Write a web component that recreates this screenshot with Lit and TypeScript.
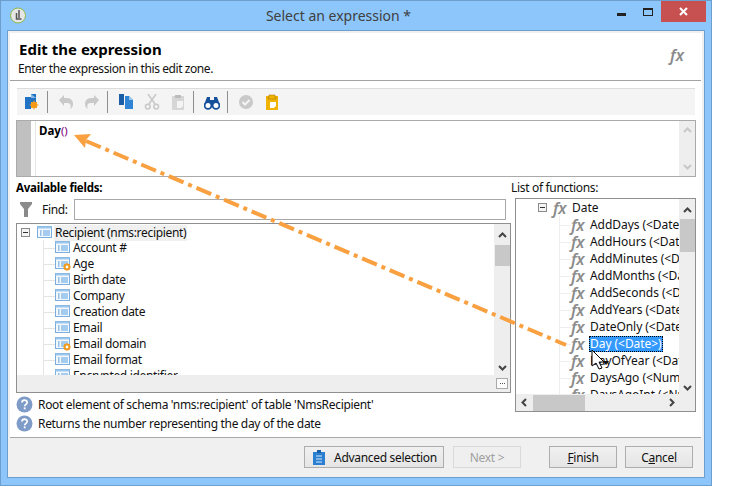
import { LitElement, css, html, svg } from "lit";
import { customElement } from "lit/decorators.js";

const fields = [
  ["Account #", false],
  ["Age", true],
  ["Birth date", false],
  ["Company", false],
  ["Creation date", false],
  ["Email", false],
  ["Email domain", true],
  ["Email format", false],
  ["Encrypted identifier", true],
] as const;

const functions = [
  "AddDays (<Date>, <Number>)",
  "AddHours (<Date>, <Number>)",
  "AddMinutes (<Date>, <Number>)",
  "AddMonths (<Date>, <Number>)",
  "AddSeconds (<Date>, <Number>)",
  "AddYears (<Date>, <Number>)",
  "DateOnly (<Date>)",
  "Day (<Date>)",
  "DayOfYear (<Date>)",
  "DaysAgo (<Number>)",
  "DaysAgoInt (<Number>)",
];

const listIcon = (gear: boolean) => html`<svg class="field-ic" width="16" height="14" viewBox="0 0 16 14">
  <rect x="0.5" y="0.5" width="14" height="11" fill="#f2f8fe" stroke="#7aaede" />
  <rect x="0.5" y="0.5" width="14" height="2" fill="#9cc6ec" />
  <path d="M3 5h1.5M3 7h1.5M3 9h1.5" stroke="#3b8ad8" />
  <path d="M6 5h7M6 7h7M6 9h7" stroke="#5a9fe0" />
  ${gear
    ? svg`<circle cx="12" cy="10" r="2.4" fill="#fff" stroke="#ef9a1e" stroke-width="2" />
        <path d="M12 6.4v1M12 12.6v1M8.4 10h1M14.6 10h1M9.5 7.5l.7.7M13.8 11.8l.7.7M14.5 7.5l-.7.7M10.2 11.8l-.7.7" stroke="#ef9a1e" />`
    : ""}
</svg>`;

const helpIcon = html`<svg width="17" height="17" viewBox="0 0 17 17">
  <circle cx="8.5" cy="8.5" r="8" fill="#7f9cc9" />
  <path d="M6 6.6c0-3.2 5.2-3.2 5.2-.1 0 1.9-2.5 1.9-2.5 3.8" fill="none" stroke="#fff" stroke-width="1.7" />
  <rect x="7.8" y="11.4" width="1.8" height="1.9" fill="#fff" />
</svg>`;

const expander = html`<svg class="expander" width="9" height="9" viewBox="0 0 9 9">
  <rect x="0.5" y="0.5" width="8" height="8" fill="#f4f4f4" stroke="#8a8a8a" />
  <path d="M2 4.5h5" stroke="#333" />
</svg>`;

const chevron = (d: string) => html`<svg width="9" height="6" viewBox="0 0 9 6">
  <path d=${d} fill="none" stroke="currentColor" stroke-width="2" />
</svg>`;
const UP = "M1 5l3.5-3.5L8 5";
const DOWN = "M1 1l3.5 3.5L8 1";

@customElement("app-root")
export class AppRoot extends LitElement {
  static styles = css`
    :host {
      display: block;
      width: 751px;
      height: 498px;
      background: #fff;
      font-family: "Noto Sans", "Open Sans", sans-serif;
      font-size: 12px;
      letter-spacing: -0.32px;
      color: #111;
      overflow: hidden;
    }
    * {
      box-sizing: border-box;
    }
    .window {
      position: relative;
      width: 712px;
      height: 486px;
      background: #8cc6fb;
      border: 1px solid #6c9fcd;
      display: flex;
      flex-direction: column;
      padding: 0 6px 7px;
    }
    .titlebar {
      height: 29px;
      flex: none;
      display: flex;
      align-items: flex-start;
      margin: 0 -6px;
      padding-right: 5px;
    }
    .logo {
      margin: 6px 0 0 9px;
    }
    .title {
      flex: 1;
      text-align: center;
      font-size: 14px;
      letter-spacing: 0;
      line-height: 29px;
      color: #404040;
      padding-left: 34px;
    }
    .ctl {
      display: flex;
      align-items: flex-start;
    }
    .ctl svg {
      display: block;
    }
    .ctl .maxi {
      margin-left: 17px;
    }
    .close {
      width: 45px;
      height: 21px;
      background: #c75050;
      display: flex;
      align-items: center;
      justify-content: center;
      margin-left: 8px;
    }
    .frame {
      flex: 1;
      min-height: 0;
      background: #f0f0f0;
      border: 1px solid #6c9fcd;
      padding: 2px 2px 0;
      display: flex;
      flex-direction: column;
    }
    .main {
      height: 404px;
      flex: none;
      background: #fff;
      display: flex;
      flex-direction: column;
    }
    .head {
      height: 48px;
      flex: none;
      margin-right: 1px;
      border-bottom: 1px solid #a3a3a3;
      padding: 6px 0 0 9px;
      display: flex;
      justify-content: space-between;
    }
    .head h1 {
      margin: 0;
      font-size: 15px;
      letter-spacing: 0;
      line-height: 20px;
      font-weight: 700;
      color: #000;
    }
    .head p {
      margin: 2px 0 0 -1px;
      letter-spacing: -0.42px;
      line-height: 16px;
    }
    .fx-big {
      font-size: 16px;
      font-style: italic;
      font-weight: 600;
      letter-spacing: 0;
      color: #8a8a8a;
      margin: 5px 17px 0 0;
      line-height: 22px;
    }
    .toolbar {
      height: 27px;
      margin: 7px 7px 0;
      flex: none;
      background: #f4f4f4;
      border-top: 1px solid #dcdcdc;
      display: flex;
      align-items: center;
      gap: 10px;
      padding-left: 7px;
    }
    .sep {
      width: 1px;
      height: 22px;
      background: #8f8f8f;
      margin-left: -3px;
    }
    .editor {
      height: 57px;
      margin: 5px 6px 0;
      flex: none;
      border: 1px solid #aaa;
      display: flex;
    }
    .gutter {
      width: 14px;
      background: #c0c0c0;
      flex: none;
    }
    .code {
      flex: 1;
      margin-left: 4px;
      border-left: 1px solid #e6e6e6;
      padding: 2px 0 0 3px;
      font-weight: 700;
      line-height: 16px;
      font-size: 11.5px;
      letter-spacing: 0;
      color: #000;
    }
    .code span {
      color: #800080;
      font-weight: 400;
    }
    .vscroll {
      width: 16px;
      flex: none;
      background: #eee;
      display: flex;
      flex-direction: column;
      align-items: center;
      justify-content: space-between;
    }
    .editor .vscroll {
      color: #c8c8c8;
      padding: 6px 0;
    }
    .lower {
      flex: 1;
      display: grid;
      grid-template-columns: 495px 180px;
      column-gap: 5px;
      margin: 0 6px;
      height: 0;
    }
    .left {
      display: flex;
      flex-direction: column;
    }
    .label {
      line-height: 16px;
      margin-top: 3px;
    }
    .label.b {
      font-weight: 700;
      font-size: 11.5px;
      letter-spacing: -0.23px;
      color: #000;
    }
    .find {
      display: flex;
      align-items: center;
      height: 22px;
      margin-top: 2px;
      padding: 0 5px 0 4px;
    }
    .find span {
      margin: 0 6px 0 10px;
    }
    .find i {
      flex: 1;
      height: 21px;
      border: 1px solid #a8a8a8;
    }
    .tree {
      height: 170px;
      margin-top: 3px;
      border: 1px solid #8f8f8f;
      display: grid;
      grid-template-columns: 1fr 16px;
      grid-template-rows: 1fr 17px;
    }
    .rows {
      overflow: hidden;
      min-width: 0;
      white-space: nowrap;
    }
    .row {
      height: 16px;
      display: flex;
      align-items: center;
      line-height: 16px;
    }
    .row .expander {
      margin: 0 7px 0 4px;
      flex: none;
    }
    .root-text {
      background: #f0f0f0;
      padding: 0 1px;
      margin-left: -1px;
    }
    .conn {
      height: 100%;
      flex: none;
      margin-left: 26px;
      width: 12px;
      background: linear-gradient(#e4e4e4, #e4e4e4) 0 0 / 1px 100% no-repeat,
        linear-gradient(#e4e4e4, #e4e4e4) 0 8px / 100% 1px no-repeat;
    }
    .field-ic {
      flex: none;
      margin-right: 2px;
    }
    .rows .top {
      padding-top: 1px;
    }
    .tree .vscroll {
      color: #444;
      justify-content: flex-start;
    }
    .tree .vscroll svg:first-child,
    .fn .vscroll svg:first-child {
      margin-top: 8px;
    }
    .tree .thumb {
      width: 15px;
      height: 21px;
      background: #c8c8c8;
      margin-top: 7px;
    }
    .tree .vscroll svg:last-child {
      margin-top: auto;
      margin-bottom: 4px;
    }
    .hscroll {
      background: #eee;
      min-width: 0;
    }
    .corner {
      background: #eee;
      display: flex;
      align-items: center;
      justify-content: center;
    }
    .dots {
      width: 12px;
      height: 11px;
      background: #fbfbfb;
      border: 1px solid #aaa;
      display: flex;
      align-items: center;
      justify-content: center;
      gap: 1px;
    }
    .dots b {
      width: 1px;
      height: 1px;
      background: #555;
    }
    .info {
      display: flex;
      align-items: center;
      gap: 5px;
      height: 19px;
    }
    .tree + .info {
      margin-top: 2px;
    }
    .right {
      display: flex;
      flex-direction: column;
      margin-left: -1px;
      min-width: 0;
    }
    .right .label {
      margin-left: -4px;
    }
    .fn {
      height: 214px;
      margin-top: 2px;
      border: 1px solid #8f8f8f;
      display: grid;
      grid-template-columns: 1fr 16px;
      grid-template-rows: 1fr 17px;
    }
    .fn .row {
      height: 17px;
      letter-spacing: -0.05px;
    }
    .fn .expander {
      margin: 0 6px 0 22px;
    }
    .fx {
      font-size: 16px;
      font-style: italic;
      font-weight: 600;
      color: #8c8c8c;
      line-height: 16px;
      width: 19px;
      flex: none;
      letter-spacing: -0.5px;
    }
    .fn .conn {
      margin-left: 43px;
      width: 12px;
      background: linear-gradient(#eee, #eee) 0 0 / 1px 100% no-repeat,
        linear-gradient(#eee, #eee) 0 9px / 100% 1px no-repeat;
    }
    .fn .sel {
      background: #3399ff;
      color: #fff;
      outline: 1px dotted #000;
      outline-offset: -1px;
      padding: 0 1px;
      margin-left: -1px;
    }
    .fn .vscroll {
      color: #444;
      justify-content: flex-start;
    }
    .fn .thumb {
      width: 15px;
      height: 33px;
      background: #c8c8c8;
      margin-top: 6px;
    }
    .fn .vscroll svg:last-child {
      margin-top: auto;
      margin-bottom: 3px;
    }
    .fn .hscroll {
      display: flex;
      align-items: center;
      color: #444;
      padding-left: 5px;
    }
    .fn .hthumb {
      width: 52px;
      height: 16px;
      background: #c8c8c8;
      margin-left: 6px;
    }
    .fn .hscroll svg:last-child {
      margin-left: auto;
      margin-right: 4px;
    }
    .footer {
      flex: 1;
      border-top: 1px solid #a9a9a9;
      margin-right: 1px;
      display: flex;
      align-items: flex-start;
      padding: 8px 8px 0 294px;
    }
    .btn {
      height: 22px;
      width: 68px;
      border: 1px solid #adadad;
      background: linear-gradient(#f0f0f0, #e5e5e5);
      display: flex;
      align-items: center;
      justify-content: center;
    }
    .btn u {
      text-underline-offset: 1px;
    }
    .btn.adv {
      width: 140px;
      gap: 9px;
      padding-left: 2px;
    }
    .btn.next {
      margin-left: 9px;
      color: #a0a0a0;
      border-color: #d9d9d9;
      background: #efefef;
    }
    .btn.finish {
      margin-left: 28px;
    }
    .btn.cancel {
      margin-left: 8px;
    }
    .overlay {
      position: absolute;
      left: -1px;
      top: -1px;
      pointer-events: none;
    }
  `;

  private toolbarIcons() {
    const grey = "#c9c9c9";
    return html`
      <svg width="16" height="16" viewBox="0 0 16 16">
        <path d="M1 3h6V0h5v9H7v6H1z" fill="#1f72c4" />
        <path d="M7 0l5 4H7z" fill="#8cbce8" />
        <circle cx="10" cy="11" r="3.2" fill="#f59a14" />
        <path d="M10 6.6v8.8M5.6 11h8.8M7 8l6 6M13 8l-6 6" stroke="#f59a14" />
      </svg>
      <i class="sep"></i>
      <svg width="16" height="16" viewBox="0 0 16 16">
        <path d="M1 6l5-5v3h3c4 0 6 3 6 6 0 2-1 4-3 5 1-2 1-4 0-5-1-1-2-1-3-1H6v3z" fill=${grey} />
      </svg>
      <svg width="16" height="16" viewBox="0 0 16 16">
        <path d="M15 6l-5-5v3H7c-4 0-6 3-6 6 0 2 1 4 3 5-1-2-1-4 0-5 1-1 2-1 3-1h3v3z" fill=${grey} />
      </svg>
      <i class="sep"></i>
      <svg width="16" height="16" viewBox="0 0 16 16">
        <path d="M1 0h5v11H1z" fill="#1a5ea8" />
        <path d="M7 2h4l4 4v9H7z" fill="#2f84d4" />
        <path d="M11 2v4h4z" fill="#9cc8ee" />
      </svg>
      <svg width="16" height="16" viewBox="0 0 16 16">
        <path d="M4 0l7 10M12 0L5 10" stroke=${grey} stroke-width="1.6" fill="none" />
        <circle cx="3.8" cy="12.6" r="2.4" fill="none" stroke=${grey} stroke-width="1.5" />
        <circle cx="12.2" cy="12.6" r="2.4" fill="none" stroke=${grey} stroke-width="1.5" />
      </svg>
      <svg width="16" height="16" viewBox="0 0 16 16">
        <path d="M2 2h12v14H2z" fill="#d6d6d6" />
        <path d="M5 1h6v3H5z" fill="#bbb" />
        <path d="M7 7h6v5l-2 2H7z" fill="#f4f4f4" />
      </svg>
      <i class="sep"></i>
      <svg width="16" height="16" viewBox="0 0 16 16">
        <path d="M3 3h3v3h4V3h3l3 8H0z" fill="#17509a" />
        <circle cx="4" cy="11.5" r="3.4" fill="#fff" stroke="#17509a" stroke-width="1.8" />
        <circle cx="12" cy="11.5" r="3.4" fill="#fff" stroke="#17509a" stroke-width="1.8" />
      </svg>
      <i class="sep"></i>
      <svg width="16" height="16" viewBox="0 0 16 16">
        <circle cx="8" cy="8" r="7" fill=${grey} />
        <path d="M4.5 8l2.5 2.5 4.5-4.5" fill="none" stroke="#f4f4f4" stroke-width="2" />
      </svg>
      <svg width="16" height="16" viewBox="0 0 16 16">
        <path d="M2 2h12v14H2z" fill="#f2b200" />
        <path d="M5 3V1h6v2h1v2H4V3z" fill="#f2b200" stroke="#a97c00" stroke-width="0.6" />
        <path d="M6 8h6v4l-2 2H6z" fill="#fff" />
      </svg>
    `;
  }

  render() {
    return html`
      <div class="window">
        <div class="titlebar">
          <svg class="logo" width="16" height="17" viewBox="0 0 16 17">
            <circle cx="8" cy="8.5" r="7.5" fill="#e6e6e6" stroke="#8db84a" />
            <path d="M9 3v8M6.5 6v6h5" fill="none" stroke="#555" stroke-width="1.5" />
          </svg>
          <div class="title">Select an expression *</div>
          <div class="ctl">
            <svg width="9" height="16" viewBox="0 0 9 16"><rect y="12" width="9" height="3" fill="#222" /></svg>
            <svg class="maxi" width="10" height="16" viewBox="0 0 10 16">
              <rect x="0.5" y="7.5" width="9" height="7" fill="none" stroke="#222" />
              <rect y="7" width="10" height="2" fill="#222" />
            </svg>
            <div class="close">
              <svg width="9" height="9" viewBox="0 0 9 9">
                <path d="M1 1l7 7M8 1L1 8" stroke="#fff" stroke-width="2" />
              </svg>
            </div>
          </div>
        </div>
        <div class="frame">
          <div class="main">
            <div class="head">
              <div>
                <h1>Edit the expression</h1>
                <p>Enter the expression in this edit zone.</p>
              </div>
              <div class="fx-big">fx</div>
            </div>
            <div class="toolbar">${this.toolbarIcons()}</div>
            <div class="editor">
              <div class="gutter"></div>
              <div class="code">Day<span>()</span></div>
              <div class="vscroll">${chevron(UP)}${chevron(DOWN)}</div>
            </div>
            <div class="lower">
              <div class="left">
                <div class="label b">Available fields:</div>
                <div class="find">
                  <svg width="12" height="15" viewBox="0 0 12 15">
                    <path d="M0 0h12v2L8 7v8H4V7L0 2z" fill="#8a8a8a" />
                  </svg>
                  <span>Find:</span>
                  <i></i>
                </div>
                <div class="tree">
                  <div class="rows">
                    <div class="row top">
                      ${expander}${listIcon(false)}<span class="root-text">Recipient (nms:recipient)</span>
                    </div>
                    ${fields.map(
                      ([name, gear]) => html`<div class="row">
                        <i class="conn"></i>${listIcon(gear)}<span>${name}</span>
                      </div>`
                    )}
                  </div>
                  <div class="vscroll">
                    ${chevron(UP)}
                    <div class="thumb"></div>
                    ${chevron(DOWN)}
                  </div>
                  <div class="hscroll"></div>
                  <div class="corner"><div class="dots"><b></b><b></b><b></b></div></div>
                </div>
                <div class="info">${helpIcon}<span>Root element of schema 'nms:recipient' of table 'NmsRecipient'</span></div>
                <div class="info">${helpIcon}<span>Returns the number representing the day of the date</span></div>
              </div>
              <div class="right">
                <div class="label">List of functions:</div>
                <div class="fn">
                  <div class="rows">
                    <div class="row">${expander}<span class="fx">fx</span><span>Date</span></div>
                    ${functions.map(
                      (name) => html`<div class="row">
                        <i class="conn"></i><span class="fx">fx</span>
                        <span class=${name === "Day (<Date>)" ? "sel" : ""}>${name}</span>
                      </div>`
                    )}
                  </div>
                  <div class="vscroll">
                    ${chevron(UP)}
                    <div class="thumb"></div>
                    ${chevron(DOWN)}
                  </div>
                  <div class="hscroll">
                    <svg width="6" height="9" viewBox="0 0 6 9"><path d="M5 1L1.5 4.5 5 8" fill="none" stroke="currentColor" stroke-width="2" /></svg>
                    <div class="hthumb"></div>
                    <svg width="6" height="9" viewBox="0 0 6 9"><path d="M1 1l3.5 3.5L1 8" fill="none" stroke="currentColor" stroke-width="2" /></svg>
                  </div>
                  <div class="corner"></div>
                </div>
              </div>
            </div>
          </div>
          <div class="footer">
            <div class="btn adv">
              <svg width="12" height="15" viewBox="0 0 12 15">
                <path d="M0 2h12v13H0z" fill="#2a7fd0" />
                <path d="M4 0h4v3H4z" fill="#1a5ea8" />
                <path d="M3 6h6M3 9h6M3 12h6" stroke="#d8eafa" />
              </svg>
              <span>Advanced selection</span>
            </div>
            <div class="btn next">Next &gt;</div>
            <div class="btn finish"><span><u>F</u>inish</span></div>
            <div class="btn cancel"><span>C<u>a</u>ncel</span></div>
          </div>
        </div>
        <svg class="overlay" width="712" height="486" viewBox="0 0 712 486">
          <path d="M86 141L566 345" stroke="#f9a040" stroke-width="4" stroke-dasharray="16 5 4 5" fill="none" />
          <path d="M74 135L91 134 86 140 85 148z" fill="#f9a040" />
          <path d="M592 350v16l4-3 3 6 3-1-3-6h5z" fill="#fff" stroke="#000" stroke-width="1" />
          <path d="M603 361l3 4 3-4z" fill="#111" />
        </svg>
      </div>
    `;
  }
}

declare global {
  interface HTMLElementTagNameMap {
    "app-root": AppRoot;
  }
}
